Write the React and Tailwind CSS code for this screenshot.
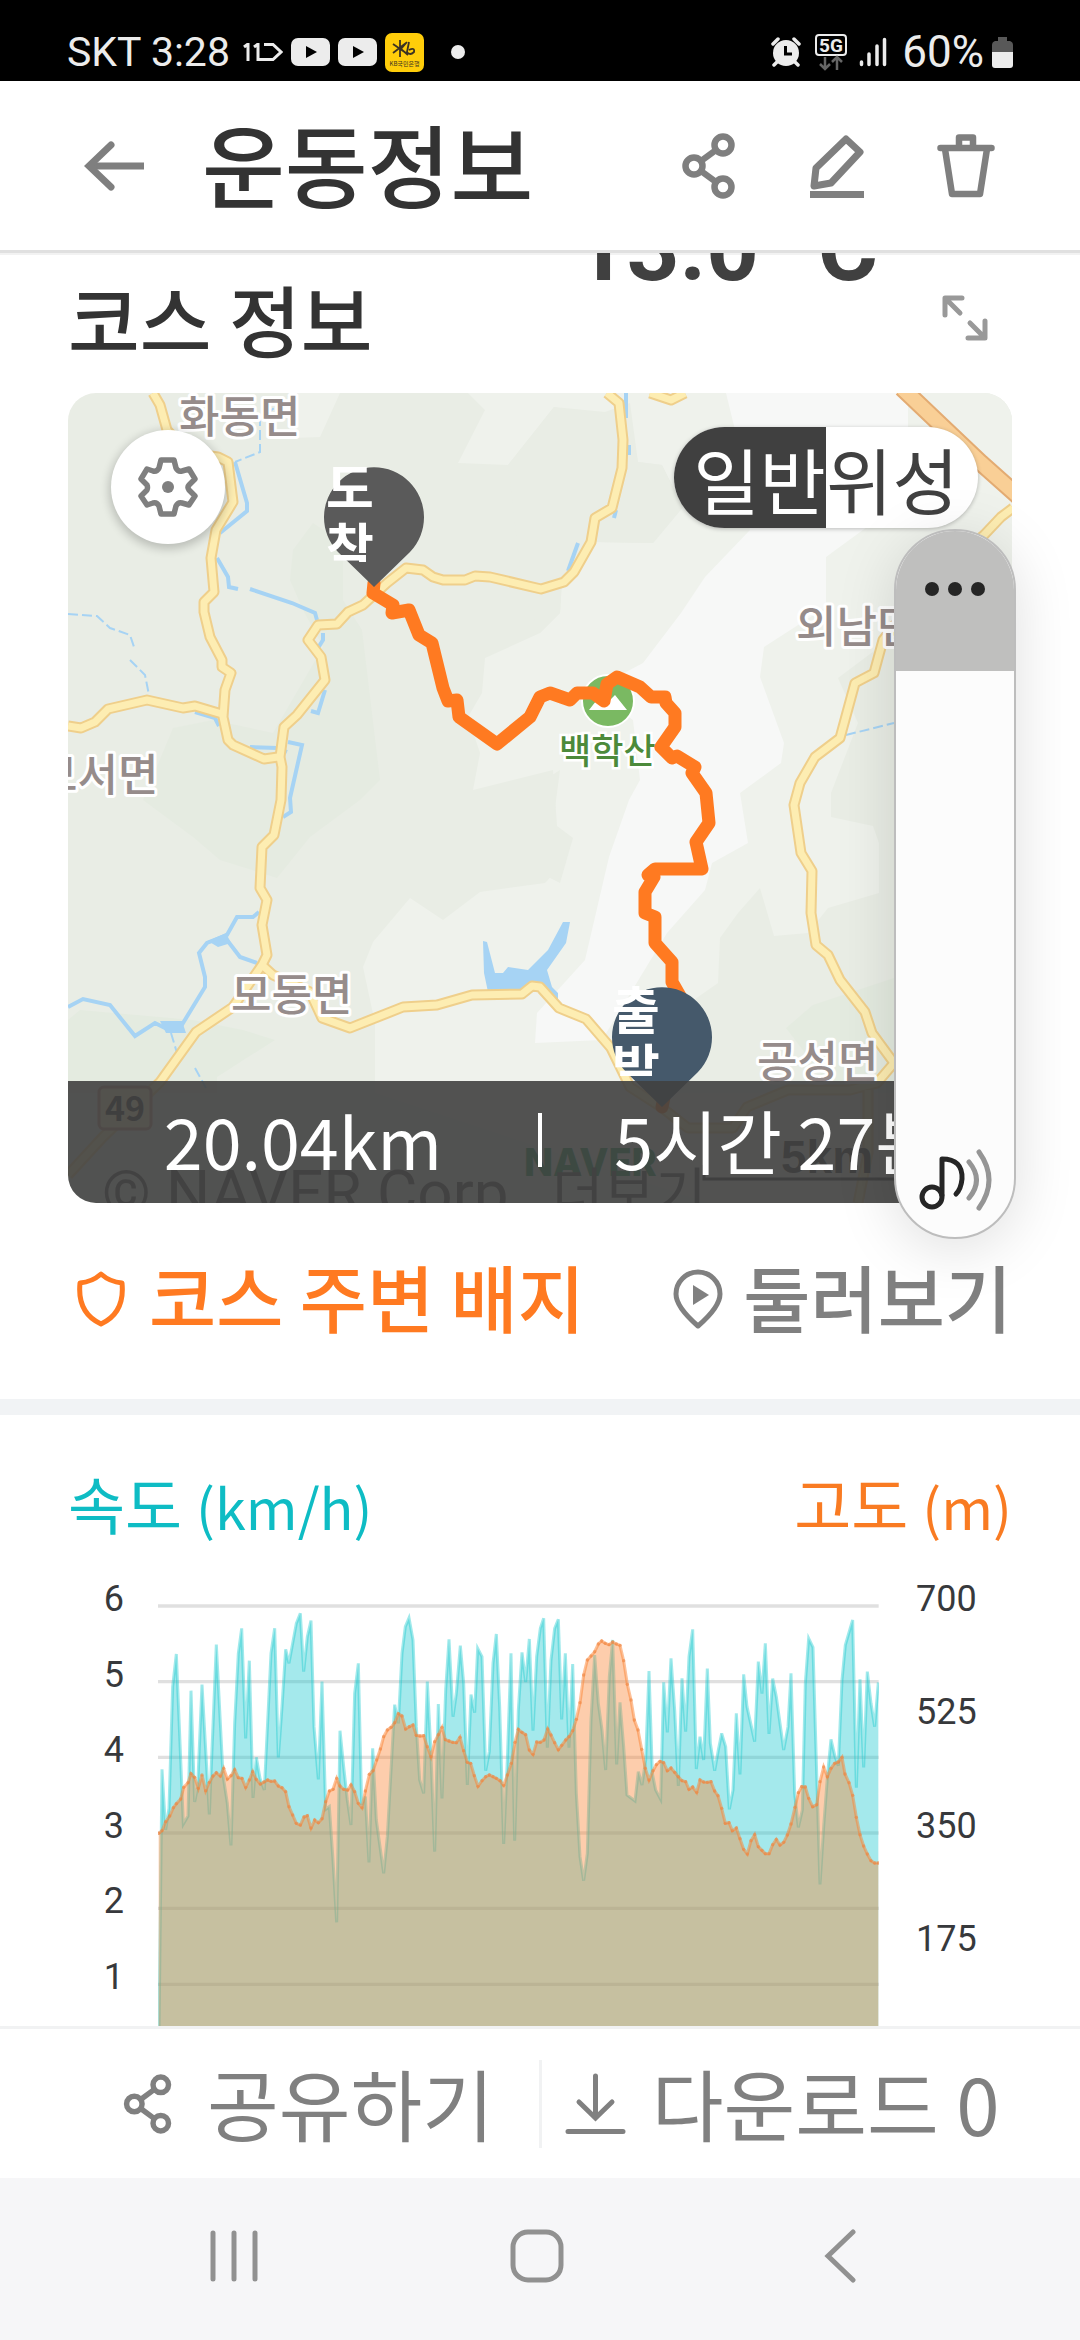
import { useState } from "react";

const KR = "font-['Noto_Sans_CJK_KR',sans-serif]";

const SPEED =
  "297,1500 307,628 318,810 328,745 339,380 350,282 371,792 385,768 394,392 405,726 414,680 427,374 449,763 470,254 490,645 503,730 514,856 525,490 536,280 546,205 558,535 569,302 580,714 590,592 601,655 614,690 634,280 645,205 656,592 667,440 678,268 688,310 710,190 722,160 732,335 743,230 754,182 763,500 776,658 787,365 798,748 809,740 820,900 831,1087 841,512 852,620 863,720 874,795 885,400 896,310 906,735 917,710 928,907 939,565 950,780 972,940 983,830 1005,434 1016,490 1027,280 1037,200 1048,174 1060,240 1070,500 1080,660 1092,700 1103,365 1113,560 1125,875 1136,432 1147,715 1158,390 1168,238 1180,470 1190,400 1202,257 1212,370 1223,675 1234,404 1245,458 1254,265 1267,290 1278,632 1289,575 1300,310 1310,222 1320,440 1332,852 1343,600 1354,280 1365,842 1376,450 1387,277 1398,366 1409,237 1420,512 1431,290 1442,205 1452,175 1463,563 1474,300 1485,205 1496,178 1506,478 1517,280 1528,563 1539,312 1550,700 1561,890 1572,962 1583,880 1594,480 1605,285 1616,430 1627,510 1638,630 1649,350 1659,240 1671,613 1681,427 1692,560 1702,705 1726,723 1736,635 1747,675 1758,600 1768,333 1778,640 1788,690 1803,718 1812,367 1823,517 1834,295 1845,450 1856,678 1867,355 1878,515 1888,290 1899,208 1910,627 1921,530 1932,600 1943,326 1952,550 1965,632 1976,570 1986,520 1998,560 2009,748 2020,690 2030,460 2041,643 2052,343 2062,440 2085,545 2096,305 2107,401 2117,250 2128,522 2139,356 2150,410 2172,570 2185,500 2194,340 2205,700 2216,802 2228,750 2237,370 2247,235 2260,262 2271,640 2281,973 2292,800 2304,640 2314,538 2326,590 2336,617 2347,360 2357,255 2379,180 2390,683 2401,358 2412,622 2423,335 2434,430 2445,500 2456,367";

const ALTITUDE =
  "297,820 307,812 318,785 330,768 341,743 350,731 363,717 372,682 385,668 394,641 405,652 416,685 427,645 438,692 449,667 460,648 470,638 482,648 492,625 503,657 514,647 525,629 536,653 547,655 558,682 569,660 579,635 590,658 602,672 613,666 624,660 634,664 645,663 656,678 667,683 678,695 688,740 699,765 710,790 722,795 733,771 743,767 754,804 765,780 776,788 787,776 798,725 809,693 820,688 831,655 841,678 852,688 864,690 874,675 885,695 896,730 907,743 917,693 929,643 940,632 951,600 962,567 972,530 983,510 994,502 1005,488 1016,461 1027,468 1038,507 1049,500 1060,495 1070,526 1081,528 1092,527 1103,560 1114,590 1125,545 1136,524 1147,502 1157,539 1168,543 1179,547 1190,548 1201,532 1212,572 1223,607 1233,610 1244,647 1255,679 1267,662 1278,650 1289,645 1300,650 1310,655 1321,662 1332,676 1343,645 1355,610 1366,547 1376,508 1387,517 1398,524 1409,570 1420,583 1431,546 1442,547 1453,540 1464,507 1474,525 1485,548 1496,569 1506,556 1518,540 1528,530 1539,512 1550,478 1561,428 1572,345 1583,300 1594,288 1605,275 1616,252 1626,243 1637,250 1648,254 1659,246 1670,252 1681,256 1692,302 1703,373 1714,420 1724,480 1735,510 1746,568 1757,625 1768,660 1780,632 1790,614 1801,604 1812,608 1823,632 1834,624 1845,637 1856,650 1867,662 1878,665 1888,688 1899,681 1911,697 1921,660 1932,666 1943,667 1954,665 1965,693 1975,707 1986,745 1997,790 2008,788 2018,812 2030,804 2041,836 2052,868 2063,882 2074,842 2085,824 2096,860 2107,871 2117,881 2128,881 2139,854 2150,838 2161,855 2172,847 2183,825 2194,792 2206,742 2216,698 2226,680 2237,681 2247,715 2259,740 2271,734 2281,665 2292,621 2303,650 2314,625 2325,610 2336,606 2347,592 2356,642 2368,668 2379,706 2390,772 2401,824 2412,858 2423,882 2434,902 2445,909 2456,909";

const ROADS = [
  "M85 0L92 12L99 37L120 60L150 64L160 69L165 109L148 137L143 165L146 199L136 209V219L142 244L154 267V274L163 280L157 297L155 324L160 347L165 352L196 366L210 364",
  "M0 333L13 335L27 329L40 316L79 307L115 315L127 313L154 321",
  "M539 0L551 10L555 47L554 75L544 115L527 125L523 149L506 179L496 189L473 196L422 184L407 183L397 187H375L365 184L355 177L338 175L319 190L295 212L280 219L269 231L250 232L240 247L253 264L257 287L229 322L216 334L212 364L214 374L213 407L206 442L194 454L192 495L199 507L194 532L199 562L194 572L165 614L128 639L92 689L35 744L0 782",
  "M194 572L205 582L242 599L254 625L282 635L335 614L369 612L404 602L454 601L464 593L472 594L491 615L518 626L543 655L562 694L593 714L620 735L665 735L679 714L720 697H782L809 690L826 670",
  "M582 0L603 7L617 0",
  "M945 115L933 124L916 142L860 190L815 247L806 280L787 290L772 345L747 364L732 390L726 412L733 460L744 478L743 520L748 552L760 562L772 587L797 619L804 640L826 670",
  "M800 697V760L790 810",
];

const ROUTE =
  "M306 190L305 200L325 212L324 220L341 217L351 242L364 250L375 295L380 308L389 307L391 324L429 351L462 324L472 304L482 300L502 307L509 300H525L536 308L539 291L549 284L572 294L583 304L597 304L598 310L607 320V334L593 354L604 365L609 363L627 374L624 380L638 400L641 430L628 449L634 476H587L580 482L586 484L577 499V520L587 524V550L604 569V589L616 610L594 714";

const MAP_LABELS = [
  { x: 111, y: 40, text: "화동면" },
  { x: -31, y: 398, text: "모서면" },
  { x: 728, y: 250, text: "외남면" },
  { x: 163, y: 618, text: "모동면" },
  { x: 689, y: 685, text: "공성면" },
];

function ShareIcon({ className, stroke }) {
  return (
    <svg viewBox="0 0 54 68" className={className} fill="none" stroke="currentColor" strokeWidth={stroke}>
      <circle cx="12" cy="34" r="8.5" />
      <circle cx="41" cy="13" r="8.5" />
      <circle cx="41" cy="55" r="8.5" />
      <path d="M19 29L34 18M19 39L34 50" />
    </svg>
  );
}

function StatusBar() {
  return (
    <div className="flex h-[81px] shrink-0 items-center justify-between bg-black pl-[67px] pr-[67px] pt-[23px] text-[#ececec] font-['Roboto',sans-serif]">
      <div className="flex items-center">
        <span className="text-[41px] leading-[58px]">SKT 3:28</span>
        <svg viewBox="0 0 40 18" className="ml-[13px] h-[18px] w-10" fill="none" stroke="currentColor" strokeWidth="3">
          <path d="M1 4L5 1V18M11 4L15 1V16.5H30L38 9L30 1.5H21" />
        </svg>
        <PlayBadge />
        <PlayBadge />
        <svg viewBox="0 0 39 39" className="ml-2 size-[39px]">
          <rect width="39" height="39" rx="7" fill="#ffcd0a" />
          <path d="M15 7V24M8 11L21 20M21 10L8 20M22 9L16 16L23 22M24 9L22 19Q25 23 29 19Q30 14 24 17" fill="none" stroke="#3b3222" strokeWidth="1.8" />
          <text x="19.500" y="33" fontSize="6" textAnchor="middle" fill="#3b3222" fontFamily="Noto Sans CJK KR, sans-serif">KB국민은행</text>
        </svg>
        <span className="ml-[27px] size-3.5 rounded-full bg-[#ececec]" />
      </div>
      <div className="flex items-center">
        <svg viewBox="0 0 30 30" className="h-[30px] w-[30px]">
          <circle cx="15" cy="16" r="13" fill="currentColor" />
          <path d="M2 7L7 2M28 7L23 2M6 25L3 28M24 25L27 28" stroke="currentColor" strokeWidth="3.500" strokeLinecap="round" />
          <path d="M14.500 9V17H21" stroke="#000" strokeWidth="3" fill="none" />
        </svg>
        <svg viewBox="0 0 32 37" className="ml-3.5 h-[37px] w-8">
          <rect x="1" y="1" width="30" height="20" rx="3" fill="none" stroke="currentColor" strokeWidth="2" />
          <text x="16" y="17.500" fontSize="19" fontWeight="700" textAnchor="middle" fill="currentColor">5G</text>
          <path d="M10 23V35M5 30L10 35L15 30M22 36V24M17 28L22 23L27 28" stroke="#666" strokeWidth="2.500" fill="none" />
        </svg>
        <svg viewBox="0 0 28 30" className="ml-3 h-[30px] w-7" stroke="currentColor" strokeWidth="3.500" strokeLinecap="round">
          <path d="M2.500 25V27.500M10 17V27.500M18 9V27.500M25.500 2.500V27.500" />
        </svg>
        <span className="ml-[15px] text-[44px] leading-[58px]">60%</span>
        <svg viewBox="0 0 21 31" className="ml-2 h-[31px] w-[21px]">
          <path d="M6 0H15V4H18Q21 5 21 8V16H0V8Q0 5 3 4H6Z" fill="#585858" />
          <path d="M0 15H21V28Q21 31 18 31H3Q0 31 0 28Z" fill="currentColor" />
        </svg>
      </div>
    </div>
  );
}

function PlayBadge() {
  return (
    <svg viewBox="0 0 39 28" className="ml-2 h-7 w-[39px]">
      <rect width="39" height="28" rx="7" fill="currentColor" />
      <path d="M15 8L26 14L15 20Z" fill="#000" />
    </svg>
  );
}

function Header() {
  return (
    <header className="relative z-10 flex h-[172px] shrink-0 items-center border-b-[3px] border-[#e0e0e0] bg-white pl-[84px] pr-[85px] text-[#7f7f7f] shadow-[0_2px_0_rgba(0,0,0,0.05)]">
      <button aria-label="뒤로">
        <svg viewBox="0 0 60 50" className="h-[50px] w-[60px]" fill="none" stroke="currentColor" strokeWidth="7">
          <path d="M4 25H60" />
          <path d="M27 4L5 25L27 46" strokeLinecap="round" />
        </svg>
      </button>
      <h1 className={`${KR} ml-[58px] flex-1 whitespace-nowrap pb-2 text-[90px] leading-[120px] font-medium text-[#333]`}>운동정보</h1>
      <button aria-label="공유">
        <ShareIcon className="h-[68px] w-[54px]" stroke="6.500" />
      </button>
      <button aria-label="수정" className="ml-[74px]">
        <svg viewBox="0 0 54 66" className="h-[66px] w-[54px]" fill="none" stroke="currentColor" strokeWidth="7" strokeLinejoin="round">
          <path d="M36 6L50 19L21 50L4 53L6 35Z" />
          <path d="M0 61.500H54" />
        </svg>
      </button>
      <button aria-label="삭제" className="ml-[73px]">
        <svg viewBox="0 0 58 64" className="h-16 w-[58px]" fill="none" stroke="currentColor" strokeWidth="6.500" strokeLinejoin="round">
          <path d="M8 15L15 60H43L50 15" />
          <path d="M3.500 14H54.500" strokeLinecap="round" />
          <path d="M22 13V3.500H36V13" />
        </svg>
      </button>
    </header>
  );
}

function CourseMap() {
  return (
    <svg viewBox="0 0 945 810" preserveAspectRatio="xMinYMin slice" className="h-full w-full" fontFamily="Noto Sans CJK KR, sans-serif">
      <defs>
        <clipPath id="goal"><path d="M250 74H360V169H250Z" /></clipPath>
        <clipPath id="start"><path d="M536 590H650V683H536Z" /></clipPath>
      </defs>
      <path d="M0 0H945V810H0Z" fill="#e9ede5" />

      {/* terrain */}
      <path d="M245 130L225 157L222 187L235 217L255 254L205 340L145 327L105 335L75 407L125 444L152 467L209 485L242 444L292 407L312 387L294 237L275 207V150Z" fill="#e5ebe1" />
      <path d="M0 627L12 617L125 627L175 637L207 647L149 684V700H0Z" fill="#e4ebe0" />
      <path d="M272 0L252 44L225 45V0Z" fill="#eff2ec" />
      <path d="M400 0L417 17L390 70L440 72L486 14L537 19L562 10L570 69L594 72L615 114L585 150L527 149L494 187L492 220L472 240L417 265L414 300L400 324L412 360L405 397L485 377L492 474L477 490L412 499L375 527L342 505L305 549L295 574L307 630V700L640 810H945V0Z" fill="#eff2ec" />
      <path d="M486 14L510 20L537 19L562 40L570 69L594 72L615 114L585 150L527 149L494 187L492 220L472 240L455 200L440 72Z" fill="#e9ede5" />
      <path d="M658 0L667 37L682 137L637 184L613 220L575 270L524 297L565 327L572 387L561 407L541 464L517 567L469 620L467 650L534 647L599 540L637 497L644 470L680 450L672 400L713 370L716 350L692 284L696 254L758 214V164L799 134L840 34V0Z" fill="#f7f8f7" />
      <path d="M770 285L790 330L763 400V424L805 433L811 450V500L760 515L740 540L706 543L692 495L670 520L652 545L650 590L600 625V700H945V300L830 240Z" fill="#e9ede5" />
      <path d="M718 635L745 612L826 585V690H760Z" fill="#e4ebe0" />
      <path d="M492 377L485 430L505 445L492 490L472 480V390Z" fill="#e9ede5" />

      {/* water */}
      <g fill="none" stroke="#a6d3f4" strokeWidth="4">
        <path d="M167 69L179 110V118L152 140M149 165L160 184L161 194L170 196M182 196L224 210L247 220L249 227M255 240V247L250 255M257 297L250 320L243 318M127 319L147 325L151 333M182 354L209 355L219 359M220 349L234 352L222 405L223 419L215 424" />
        <path d="M191 519L185 524H169L159 542L139 550L131 560L137 584V594L112 635H97L87 630L67 643L54 627L42 612L15 606L0 614M159 547L172 564L189 570" />
        <path d="M229 0L214 8L192 27V59L167 69M0 221L29 223L42 235L62 242L66 254M62 267L77 282L81 302M103 640L109 660M127 675L138 695M778 342L826 330" strokeWidth="2" strokeDasharray="10 4" />
        <path d="M558 0V25M561 52V62M548 117L546 125M527 130L522 146M510 150L500 178" />
      </g>
      <path d="M415 548L419 549L427 580H435L440 574L460 577L480 557L495 529H502L498 550L479 577L484 594L490 600V612L472 596L460 598L420 599L416 580ZM92 628H114L118 640H98ZM140 548L158 540L163 550L150 554Z" fill="#a6d3f4" />

      {/* roads */}
      <path d="M834 -5L875 34L913 70L950 103" fill="none" stroke="#e3ab72" strokeWidth="18" />
      <path d="M834 -5L875 34L913 70L950 103" fill="none" stroke="#f9cf96" strokeWidth="14" />
      <g fill="none" strokeLinejoin="round">
        {ROADS.map((d) => <path key={d} d={d} stroke="#efcf8b" strokeWidth="11" />)}
        {ROADS.map((d) => <path key={d} d={d} stroke="#fdedb2" strokeWidth="7" />)}
      </g>

      <g fill="#968c8b" stroke="#fff" strokeWidth="6" strokeLinejoin="round" paintOrder="stroke" fontSize="44" fontWeight="500">
        {MAP_LABELS.map((l) => <text key={l.text} x={l.x} y={l.y}>{l.text}</text>)}
      </g>

      <circle cx="540" cy="308" r="26" fill="#7ab962" stroke="#fff" strokeWidth="2" />
      <path d="M521 317L532 303L540 309L547 302L559 317Z" fill="#fff" />
      <text x="491" y="371" fontSize="35" fontWeight="500" fill="#4c8a3b" stroke="#fff" strokeWidth="5" paintOrder="stroke">백학산</text>

      <path d={ROUTE} fill="none" stroke="#ff7a21" strokeWidth="13" strokeLinejoin="round" strokeLinecap="round" />

      <path d="M306 194L270 159A50 50 0 1 1 342 159Z" fill="#5a5a5a" />
      <g clipPath="url(#goal)" fill="#fff" fontSize="52" fontWeight="700">
        <text x="258" y="115">도</text>
        <text x="258" y="174">착</text>
      </g>
      <path d="M594 714L558 679A50 50 0 1 1 630 679Z" fill="#45596b" />
      <g clipPath="url(#start)" fill="#fff" fontSize="52" fontWeight="700">
        <text x="544" y="637">출</text>
        <text x="544" y="695">발</text>
      </g>

      <rect x="31" y="694" width="52" height="42" rx="5" fill="#fbeec4" stroke="#c98" strokeWidth="3" />
      <text x="57" y="728" fontSize="34" fontWeight="700" textAnchor="middle" fill="#333">49</text>
      <text x="456" y="783" fontSize="38" fontWeight="800" fill="#1f9a55" fontFamily="Inter, sans-serif">NAVER</text>
      <text x="713" y="780" fontSize="46" fontWeight="700" fill="#333" fontFamily="Liberation Sans, sans-serif">5km</text>
      <path d="M636 772V786H945" fill="none" stroke="#333" strokeWidth="3" />
      <text x="34" y="821" fontSize="62" fill="#555" fontFamily="Roboto, sans-serif">© NAVER Corp.</text>
      <text x="484" y="821" fontSize="56" fill="#555">더보기</text>
    </svg>
  );
}

function MapCard() {
  const [type, setType] = useState("일반");

  return (
    <div className="relative h-[810px] overflow-hidden rounded-[28px]">
      <CourseMap />
      <button aria-label="지도 설정" className="absolute left-[43px] top-[37px] grid size-[114px] place-items-center rounded-full bg-white text-[#7f7f7f] shadow-[0_3px_10px_2px_rgba(0,0,0,0.2)]">
        <svg viewBox="0 0 60 60" className="size-[60px]" fill="none" stroke="currentColor" strokeWidth="5.500" strokeLinejoin="round">
          <path d="M23 3H36L38 11Q40 15 44 14L51 12L57 22L51 28Q49 30 51 33L57 39L51 48L44 46Q40 45 38 49L36 57H23L21 49Q19 45 15 46L9 48L3 39L9 33Q10 30 9 28L3 22L9 12L15 14Q19 15 21 11Z" />
          <circle cx="30" cy="30" r="6" fill="currentColor" stroke="none" />
        </svg>
      </button>
      <div className={`${KR} absolute right-[34px] top-[34px] flex h-[101px] overflow-hidden whitespace-nowrap rounded-full bg-white text-[72px] leading-[101px] shadow-[0_1px_4px_rgba(0,0,0,0.25)]`}>
        {["일반", "위성"].map((name, i) => (
          <button
            key={name}
            onClick={() => setType(name)}
            className={`w-[152px] ${i === 0 ? "pl-[19px]" : "pr-[19px]"} ${type === name ? "bg-[#404040] text-white" : "text-[#404040]"}`}
          >
            {name}
          </button>
        ))}
      </div>
      <div className={`${KR} absolute inset-x-0 bottom-0 flex h-[122px] items-center bg-[#404040e6] pb-1 text-[70px] leading-[100px] text-white`}>
        <p className="flex-1 text-center">20.04km</p>
        <span className="h-[54px] w-1 bg-white" />
        <p className="flex-1 whitespace-nowrap text-center">5시간 27분</p>
      </div>
    </div>
  );
}

function CourseLinks() {
  return (
    <div className={`${KR} flex h-[196px] items-center justify-between whitespace-nowrap pb-1 pl-2 text-[73px] leading-[100px] font-medium`}>
      <a href="#badges" className="flex items-center gap-[23px] text-[#ff7a21]">
        <svg viewBox="0 0 50 56" className="h-14 w-[50px]" fill="none" stroke="currentColor" strokeWidth="5" strokeLinejoin="round">
          <path d="M25 3Q34 11 46 12Q49 42 25 53Q1 42 4 12Q16 11 25 3Z" />
        </svg>
        <span className="pb-2">코스 주변 배지</span>
      </a>
      <a href="#around" className="flex items-center gap-5 text-[#808080]">
        <svg viewBox="0 0 50 60" className="h-[60px] w-[50px]" fill="none" stroke="currentColor" strokeWidth="5" strokeLinejoin="round">
          <path d="M25 57Q3 38 3 25A22 22 0 0 1 47 25Q47 38 25 57Z" />
          <path d="M20 16L36 26L20 36Z" fill="currentColor" stroke="none" />
        </svg>
        <span className="pb-2">둘러보기</span>
      </a>
    </div>
  );
}

function Chart() {
  const dots = ALTITUDE.split(" ").map((p) => p.split(","));

  return (
    <section className="border-t-[16px] border-[#f1f3f5] px-[68px] pt-12">
      <div className={`${KR} flex h-[116px] items-start justify-between text-[62px] leading-[80px]`}>
        <h3 className="text-[#0ebcc4]">속도 <span className="text-[56px] leading-none">(km/h)</span></h3>
        <h3 className="text-[#f97b22]">고도 <span className="text-[56px] leading-none">(m)</span></h3>
      </div>
      <div className="flex items-start text-[36px] leading-10 text-[#37393c] font-['Roboto',sans-serif]">
        <div className="flex h-[418px] w-14 shrink-0 flex-col justify-between text-right">
          {[6, 5, 4, 3, 2, 1].map((n) => <span key={n}>{n}</span>)}
        </div>
        <svg viewBox="295 120 2163 1341" preserveAspectRatio="none" className="ml-[34px] mt-[21px] h-[447px] min-w-0 flex-1">
          {[138, 365, 592, 819, 1045, 1273].map((y) => (
            <path key={y} d={`M295 ${y}H2457`} stroke="#e0e0e0" strokeWidth="10" />
          ))}
          <polygon points={`${SPEED} 2456,1500`} fill="#14c7ce" fillOpacity="0.39" />
          <polyline points={SPEED} fill="none" stroke="#14c7ce" strokeOpacity="0.4" strokeWidth="9" />
          <polygon points={`297,1500 ${ALTITUDE} 2456,1500`} fill="#fb822f" fillOpacity="0.4" />
          <polyline points={ALTITUDE} fill="none" stroke="#fb822f" strokeOpacity="0.5" strokeWidth="9" />
          {dots.map(([x, y]) => <circle key={x} cx={x} cy={y} r="5" fill="#ee8440" fillOpacity="0.6" />)}
        </svg>
        <div className="flex h-[380px] w-[133px] shrink-0 flex-col justify-between pl-[37px]">
          {[700, 525, 350, 175].map((n) => <span key={n}>{n}</span>)}
        </div>
      </div>
    </section>
  );
}

function MediaVolume() {
  return (
    <div className="absolute right-16 top-[529px] z-20 flex h-[710px] w-[122px] flex-col overflow-hidden rounded-full border-2 border-[#bdbdbd] bg-[#fcfcfc] shadow-[0_10px_60px_rgba(0,0,0,0.13)]">
      <button aria-label="더보기" className="flex h-[140px] items-center justify-center gap-[9px] bg-[#bfbfbe] pb-6">
        <span className="size-3.5 rounded-full bg-[#252525]" />
        <span className="size-3.5 rounded-full bg-[#252525]" />
        <span className="size-3.5 rounded-full bg-[#252525]" />
      </button>
      <input type="range" aria-label="미디어 음량" className="w-full flex-1 opacity-0" />
      <button aria-label="미디어" className="grid h-28 place-items-center">
        <svg viewBox="0 0 76 64" className="h-16 w-[76px]" fill="none" strokeLinecap="round" strokeLinejoin="round">
          <path d="M25 46V10Q46 10 45 30Q44 40 39 45" stroke="#252525" strokeWidth="5" />
          <circle cx="15" cy="48" r="10" stroke="#252525" strokeWidth="5" />
          <path d="M52 13Q67 31 52 49M62 3Q82 31 62 59" stroke="#959595" strokeWidth="5" />
        </svg>
      </button>
    </div>
  );
}

function BottomBar() {
  return (
    <div className={`${KR} flex h-[152px] shrink-0 items-center whitespace-nowrap border-t-[3px] border-[#f1f2f3] bg-white text-[78px] leading-[120px] text-[#808080]`}>
      <button className="flex w-1/2 min-w-0 items-center gap-[32px] pl-[121px]">
        <ShareIcon className="h-[62px] w-[54px]" stroke="6" />
        <span className="pb-1">공유하기</span>
      </button>
      <span className="h-[88px] w-[3px] shrink-0 bg-[#f1f2f3]" />
      <button className="flex w-1/2 min-w-0 items-center gap-[26px] pl-[23px]">
        <svg viewBox="0 0 61 62" className="h-[62px] w-[61px]" fill="none" stroke="currentColor" strokeWidth="5" strokeLinecap="round">
          <path d="M30.500 3V44M14 29L30.500 45L47 29M3 58.500H58" />
        </svg>
        <span className="pb-1">다운로드 0</span>
      </button>
    </div>
  );
}

function NavBar() {
  return (
    <nav className="flex h-[162px] shrink-0 items-center bg-[#f6f6f8] pb-[7px] pl-[82px] pr-[88px] text-[#919191]">
      <button aria-label="최근 앱" className="grid flex-1 place-items-center">
        <svg viewBox="0 0 50 52" className="h-[52px] w-[50px]" stroke="currentColor" strokeWidth="5" strokeLinecap="round">
          <path d="M4 3V49M25 3V49M46 3V49" />
        </svg>
      </button>
      <button aria-label="홈" className="grid flex-1 place-items-center">
        <svg viewBox="0 0 54 54" className="size-[54px]" fill="none" stroke="currentColor" strokeWidth="5">
          <rect x="3" y="3" width="48" height="48" rx="15" />
        </svg>
      </button>
      <button aria-label="뒤로 가기" className="grid flex-1 place-items-center">
        <svg viewBox="0 0 32 54" className="h-[54px] w-8" fill="none" stroke="currentColor" strokeWidth="5" strokeLinecap="round">
          <path d="M29 3L4 27L29 51" />
        </svg>
      </button>
    </nav>
  );
}

export default function App() {
  return (
    <div className="relative flex h-screen flex-col overflow-hidden bg-white">
      <StatusBar />
      <Header />
      <main className="min-h-0 flex-1 overflow-hidden">
        <section className="px-[68px]">
          <p className="-mt-[50px] whitespace-nowrap pl-[506px] text-[92px] leading-[92px] font-bold text-[#404040] font-['Roboto',sans-serif]">13.0 °C</p>
          <div className="-mt-[14px] mb-[38px] flex h-[74px] items-center justify-between">
            <h2 className={`${KR} text-[78px] leading-[74px] font-medium text-[#333]`}>코스 정보</h2>
            <button aria-label="지도 확대" className="mr-6 text-[#999]">
              <svg viewBox="0 0 46 46" className="size-[46px]" fill="none" stroke="currentColor" strokeWidth="5" strokeLinecap="round" strokeLinejoin="round">
                <path d="M20 3H3V20M4 4L18 18M26 43H43V26M42 42L28 28" />
              </svg>
            </button>
          </div>
          <MapCard />
          <CourseLinks />
        </section>
        <Chart />
      </main>
      <BottomBar />
      <NavBar />
      <MediaVolume />
    </div>
  );
}
